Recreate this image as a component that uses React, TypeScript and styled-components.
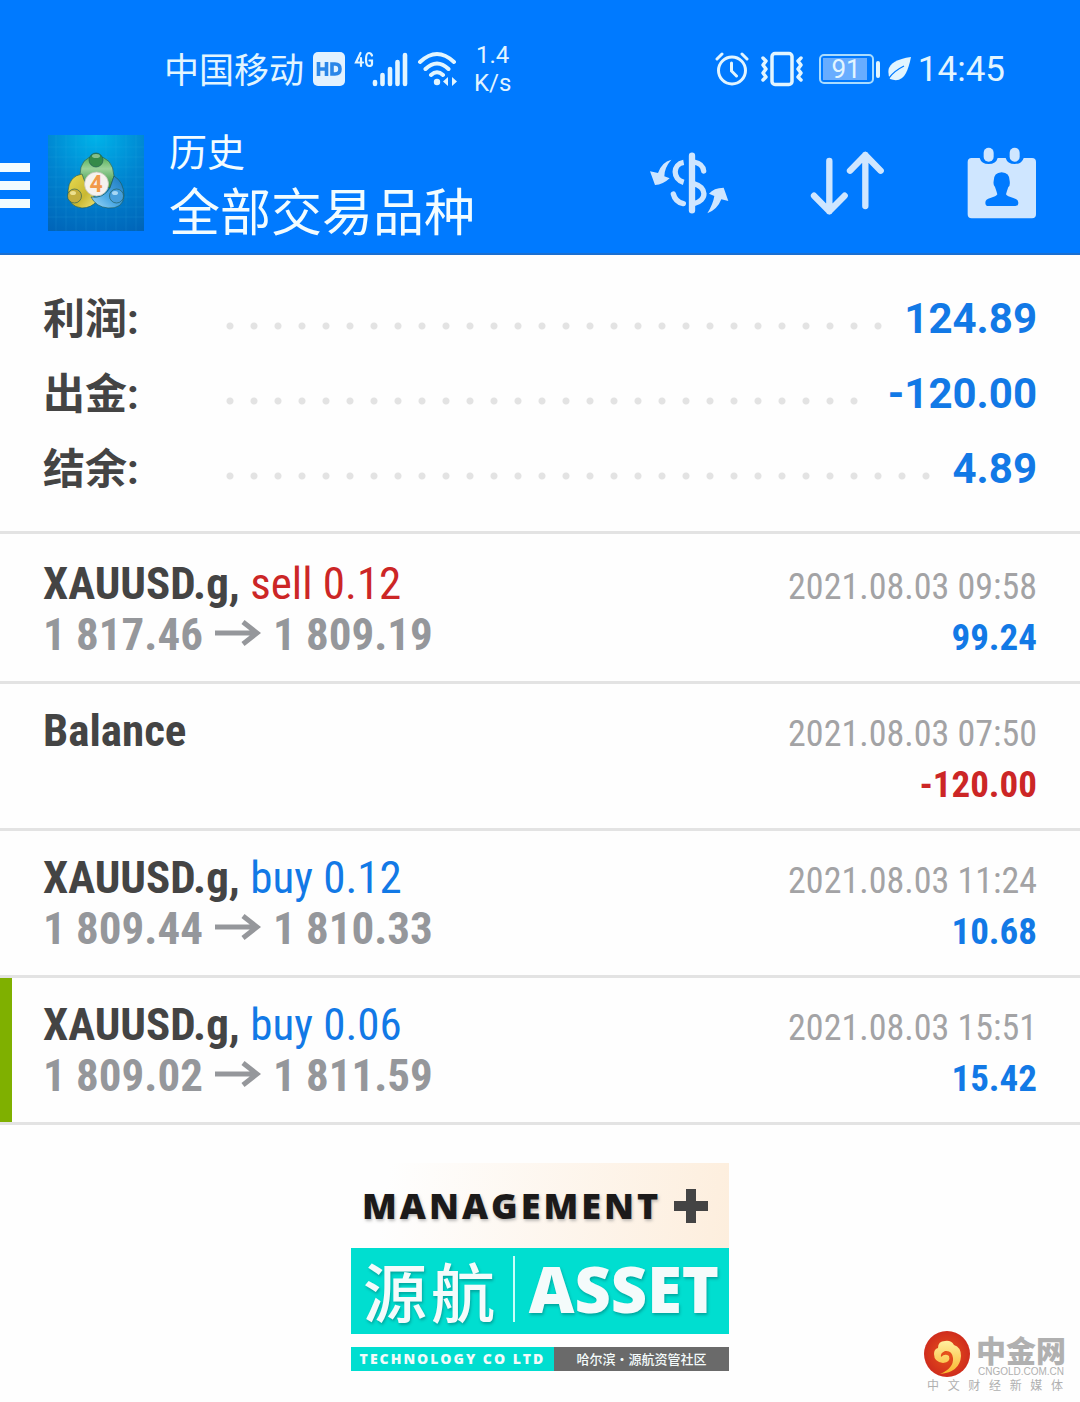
import React from "react";
import styled, { createGlobalStyle } from "styled-components";

const cjk = `"Noto Sans CJK SC", sans-serif`;
const condensed = `"Roboto Condensed", "Liberation Sans Narrow", Roboto, ${cjk}`;
const color = {
  brand: "#007aff",
  pale: "#cfe6ff",
  ink: "#444444",
  muted: "#95979b",
  date: "#a3a3a5",
  blue: "#1279e6",
  red: "#cc2626",
  line: "#e3e3e3",
  teal: "#00ded0",
};

const Global = createGlobalStyle`
  * { box-sizing: border-box; }
  body { margin: 0; background: #fefefe; font-family: Roboto, ${cjk}; }
`;

const Page = styled.div`
  display: flex;
  flex-direction: column;
`;

const Header = styled.header`
  background: ${color.brand};
  color: #e2f5ff;
  border-bottom: 2px solid #1b6fd0;
`;

const StatusBar = styled.div`
  display: flex;
  justify-content: space-between;
  align-items: center;
  height: 112px;
  padding: 26px 75px 0 164px;
`;

const StatusGroup = styled.div<{ $gap: number }>`
  display: flex;
  align-items: center;
  gap: ${(p) => p.$gap}px;
`;

const Carrier = styled.span`
  padding-top: 5px;
  font-size: 35px;
  line-height: 40px;
`;

const Speed = styled.span`
  font-size: 24px;
  line-height: 28px;
  text-align: center;
  margin-left: 7px;
`;

const Clock = styled.span`
  padding-top: 2px;
  font-size: 35px;
  line-height: 40px;
`;

const AppBar = styled.div`
  display: flex;
  align-items: center;
  height: 141px;
  padding-right: 43px;
`;

const IconButton = styled.button`
  display: flex;
  padding: 0;
  border: 0;
  background: none;
  color: ${color.pale};
`;

const MenuButton = styled(IconButton)`
  color: #f2fcff;
  margin-right: 18px;
`;

const Titles = styled.div`
  flex: 1;
  margin-left: 25px;
  padding-top: 10px;
  color: #f2fcff;
`;

const Overline = styled.div`
  font-size: 38px;
  line-height: 52px;
`;

const Title = styled.h1`
  margin: 0;
  font-size: 51px;
  font-weight: 400;
  line-height: 70px;
`;

const Actions = styled.div`
  display: flex;
  align-items: center;
  gap: 81px;
`;

const Summary = styled.dl`
  margin: 0;
  padding: 26px 43px 25px;
  border-bottom: 3px solid ${color.line};
`;

const SummaryRow = styled.div`
  display: flex;
  align-items: center;
  height: 75px;
  font-size: 42px;
  font-weight: 700;
`;

const SummaryLabel = styled.dt`
  width: 175px;
  padding-bottom: 6px;
  color: ${color.ink};
`;

const Leader = styled.div`
  flex: 1;
  margin-right: 8px;

  &::before {
    content: "";
    display: block;
    width: round(down, 100%, 24px);
    height: 22px;
    background: radial-gradient(circle at 12px 4px, #e3e3e3 3px, transparent 4px) left bottom / 24px 8px repeat-x;
  }
`;

const SummaryValue = styled.dd`
  margin: 0;
  color: ${color.blue};
`;

const Deals = styled.ul`
  margin: 0;
  padding: 3px 0 0;
  list-style: none;
  font-family: ${condensed};
`;

const Deal = styled.li<{ $marked?: boolean }>`
  height: 147px;
  padding: 21px 43px;
  border-bottom: 3px solid ${color.line};
  box-shadow: ${(p) => (p.$marked ? "inset 12px 0 0 #7fb000" : "none")};
`;

const DealLine = styled.div`
  display: flex;
  justify-content: space-between;
  align-items: baseline;
  height: 51px;
  line-height: 51px;
`;

const Instrument = styled.span`
  color: ${color.ink};
  font-size: 45px;
  font-weight: 700;
`;

const Side = styled.span<{ $side: "buy" | "sell" }>`
  color: ${(p) => (p.$side === "buy" ? color.blue : color.red)};
  font-weight: 400;
`;

const Prices = styled.span`
  color: ${color.muted};
  font-size: 45px;
  font-weight: 700;

  &::before {
    content: "\\200b";
  }

  svg {
    margin: 0 12px;
    vertical-align: 4px;
  }
`;

const DateText = styled.time`
  color: ${color.date};
  font-size: 36px;
`;

const Amount = styled.span<{ $negative: boolean }>`
  color: ${(p) => (p.$negative ? color.red : color.blue)};
  font-size: 37px;
  font-weight: 700;
`;

const Footer = styled.footer`
  display: grid;
  grid-template-columns: 1fr auto 1fr;
  align-items: end;
  padding: 38px 14px 8px;
`;

const Banner = styled.div`
  grid-column: 2;
  width: 378px;
  margin-bottom: 22px;
  font-family: "Open Sans", ${cjk};
`;

const BannerTop = styled.div`
  display: flex;
  align-items: center;
  justify-content: space-between;
  height: 85px;
  padding: 0 20px 0 11px;
  background: linear-gradient(100deg, #fefefe 10%, #fdeedd);
  color: #1c1a1a;
  font-size: 36px;
  font-weight: 800;
  letter-spacing: 3px;
  text-shadow: 1px 2px 3px #8888;
`;

const BannerMain = styled.div`
  display: flex;
  align-items: center;
  justify-content: space-between;
  height: 86px;
  padding: 0 10px 4px 12px;
  background: ${color.teal};
  color: #f4fbfb;
  text-shadow: 1px 2px 3px #0667;
`;

const BannerName = styled.span`
  font-family: ${cjk};
  font-size: 64px;
  font-weight: 500;
  line-height: 78px;
  letter-spacing: 4px;
`;

const BannerRule = styled.span`
  width: 2px;
  height: 66px;
  background: #c8fffa;
`;

const BannerWord = styled.span`
  font-size: 63px;
  font-weight: 800;
  line-height: 78px;
`;

const BannerStrip = styled.div`
  display: flex;
  height: 24px;
  margin-top: 13px;
  line-height: 24px;
  color: #f4fbfb;
  text-align: center;
`;

const StripLeft = styled.span`
  width: 203px;
  background: ${color.teal};
  font-size: 14px;
  font-weight: 800;
  letter-spacing: 2px;
`;

const StripRight = styled.span`
  flex: 1;
  background: #6a6a6a;
  font-family: ${cjk};
  font-size: 13px;
  font-weight: 500;
`;

const Source = styled.div`
  grid-column: 3;
  justify-self: end;
  color: #b0b0b0;
`;

const SourceTop = styled.div`
  display: flex;
  align-items: center;
  gap: 6px;
`;

const SourceName = styled.div`
  font-size: 30px;
  font-weight: 900;
  line-height: 36px;
  font-family: ${cjk};
`;

const SourceSite = styled.div`
  font: 10px/10px "Liberation Sans", sans-serif;
  text-align: center;
`;

const SourceTagline = styled.div`
  display: flex;
  justify-content: space-between;
  padding: 0 3px;
  font: 12px/16px ${cjk};
`;

const HdIcon = () => (
  <svg width="32" height="34" viewBox="0 0 32 34">
    <rect width="32" height="34" rx="5" fill="#e2f2ff" />
    <path d="M5.500 10v14M13.500 10v14M5 17h9M19 12v10h3q5 0 5-5t-5-5z" fill="none" stroke="#2a86e8" strokeWidth="3.600" />
  </svg>
);

const SignalIcon = () => (
  <svg width="54" height="36" viewBox="0 0 54 36" fill="none" stroke="#e2f5ff" strokeLinecap="round">
    <path d="M6.500 2L2 11.500h7M7 7v8" strokeWidth="2.200" />
    <path d="M18 4.500q-1-2.500-3-2.500-3 0-3 6.500t3 6.500q3 0 3-2v-3.500h-2.500" strokeWidth="2.200" />
    <path d="M21 33v-2M28.500 33v-9M36 33V18M43.500 33V11M51 33V4" strokeWidth="4.600" />
  </svg>
);

const WifiIcon = () => (
  <svg width="41" height="36" viewBox="0 0 41 36" fill="none" stroke="#e2f5ff" strokeWidth="4" strokeLinecap="round">
    <path d="M3 11Q20 -5 37 11M8.500 18Q20 7 31.500 18M14 24Q20 18.500 26 24" />
    <circle cx="20" cy="31" r="3.200" fill="#e2f5ff" stroke="none" />
    <path d="M26 30.500l5-4.500v9zM40 30.500l-5-4.500v9z" fill="#e2f5ff" stroke="none" />
  </svg>
);

const AlarmIcon = () => (
  <svg width="40" height="36" viewBox="0 0 40 36" fill="none" stroke="#e2f5ff" strokeWidth="3" strokeLinecap="round">
    <circle cx="17" cy="19.500" r="13.500" />
    <path d="M16.500 12v8l5 5M2 8l5-5M32 8l-5-5" />
  </svg>
);

const VibrateIcon = () => (
  <svg width="52" height="36" viewBox="0 0 52 36" fill="none" stroke="#e2f5ff" strokeWidth="3.500" strokeLinecap="round" strokeLinejoin="round">
    <rect x="11" y="2.500" width="20" height="31" rx="3" />
    <path d="M2 7l3 3-3 4 3 4-3 4 3 4-3 3M40 7l-3 3 3 4-3 4 3 4-3 4 3 3" />
  </svg>
);

const BatteryIcon = () => (
  <svg width="62" height="30" viewBox="0 0 62 30">
    <rect x="1" y="1" width="53" height="28" rx="4" fill="none" stroke="#a9dcff" strokeWidth="2" />
    <rect x="4" y="4" width="44" height="22" fill="#68adff" />
    <rect x="57" y="7" width="4" height="17" rx="2" fill="#e2f5ff" />
    <text x="27" y="24" fontSize="26" textAnchor="middle" fill="#e2f5ff">91</text>
  </svg>
);

const LeafIcon = () => (
  <svg width="25" height="26" viewBox="0 0 25 26">
    <path d="M24 1Q3 4 1.500 14Q1 19 3 23Q14 27 19 17Q22 11 24 1Z" fill="#e2f5ff" />
    <path d="M2 22Q7 15 17 10" fill="none" stroke={color.brand} strokeWidth="1.300" />
  </svg>
);

const MenuIcon = () => (
  <svg width="30" height="50" viewBox="0 0 30 50" fill="currentColor">
    <path d="M0 5h30v9H0zM0 23h30v9H0zM0 41h30v9H0z" />
  </svg>
);

const AppLogo = () => (
  <svg width="96" height="96" viewBox="0 0 96 96">
    <defs>
      <radialGradient id="sky" cx="0.5" cy="0" r="1.100">
        <stop offset="0" stopColor="#00b4ea" />
        <stop offset="0.500" stopColor="#0084d0" />
        <stop offset="1" stopColor="#0064b8" />
      </radialGradient>
      <linearGradient id="green" x2="0" y2="1">
        <stop offset="0" stopColor="#4fae55" />
        <stop offset="0.400" stopColor="#9bd29a" />
        <stop offset="1" stopColor="#2e8f3d" />
      </linearGradient>
      <linearGradient id="gold" x2="1" y2="1">
        <stop offset="0" stopColor="#e9dc52" />
        <stop offset="0.600" stopColor="#c9b832" />
        <stop offset="1" stopColor="#efe57c" />
      </linearGradient>
      <linearGradient id="azure" x1="1" x2="0" y2="1">
        <stop offset="0" stopColor="#1976bd" />
        <stop offset="0.600" stopColor="#4fabe6" />
        <stop offset="1" stopColor="#a5dcf8" />
      </linearGradient>
    </defs>
    <rect width="96" height="96" fill="url(#sky)" />
    <path
      d="M8 0v96M18 0v96M28 0v96M38 0v96M48 0v96M58 0v96M68 0v96M78 0v96M88 0v96M0 12h96M0 22h96M0 32h96M0 42h96M0 52h96M0 62h96M0 72h96M0 82h96"
      stroke="#48b8ee"
      strokeOpacity="0.130"
    />
    <g stroke="#1f5a55" strokeWidth="0.800" strokeOpacity="0.800">
      <path d="M32 40Q32 22 48 21Q65 22 66 41L62 53L36 46Z" fill="url(#green)" />
      <path d="M34 39Q21 41 20 56Q20 72 34 73Q43 73 49 66L38 50Z" fill="url(#gold)" />
      <path d="M66 41Q76 47 76 61Q75 74 60 73Q48 72 43 62Q55 64 62 53Z" fill="url(#azure)" />
      <circle cx="48" cy="25" r="7" fill="#348b49" />
      <circle cx="26.500" cy="61" r="7" fill="#c4ae3e" />
      <circle cx="68.500" cy="61" r="7" fill="#469edb" />
    </g>
    <ellipse cx="48" cy="21" rx="4" ry="2" fill="#bce2b8" fillOpacity="0.600" />
    <ellipse cx="25" cy="58" rx="3" ry="2" fill="#fff5b4" fillOpacity="0.700" />
    <ellipse cx="67" cy="58" rx="3" ry="2" fill="#d0efff" fillOpacity="0.700" />
    <circle cx="48.500" cy="49" r="12" fill="#f6f2ee" stroke="#c4c4b8" strokeWidth="0.800" />
    <text x="48" y="57" fontSize="23" fontWeight="700" textAnchor="middle" fill="#f29a4a">4</text>
  </svg>
);

const ExchangeIcon = () => (
  <svg width="80" height="64" viewBox="60 58 240 192" fill="none" stroke="currentColor" strokeWidth="16">
    <path d="M189 72V236" strokeWidth="19" strokeLinecap="round" />
    <path d="M195 91Q222 96 224 118M133 187Q139 211 163 216" strokeLinecap="round" />
    <path d="M164 92C130 98 130 142 164 152M194 156C234 166 236 206 194 216" />
    <path d="M127 84Q98 91 87 124L63 119L78 160Q102 159 122 140L106 134Q106 108 127 84ZM235 245Q252 218 256 193L240 186Q254 168 284 168L298 208L277 203Q265 234 235 245Z" fill="currentColor" stroke="none" />
  </svg>
);

const SortIcon = () => (
  <svg width="76" height="66" viewBox="536 58 228 198" fill="none" stroke="currentColor" strokeWidth="19" strokeLinecap="round" strokeLinejoin="round">
    <path d="M594 91V242M548 195L594 242L640 195M702 226V73M656 120L702 73L748 120" />
  </svg>
);

const CalendarIcon = () => (
  <svg width="70" height="72" viewBox="1012 48 210 216" fill="currentColor">
    <path d="M1026 81H1050Q1055 99 1077 99Q1099 99 1104 81H1128Q1133 99 1155 99Q1177 99 1182 81H1207Q1219 81 1219 93V250Q1219 262 1207 262H1026Q1014 262 1014 250V93Q1014 81 1026 81Z" />
    <rect x="1062" y="50" width="30" height="42" rx="15" />
    <rect x="1140" y="50" width="30" height="42" rx="15" />
    <path d="M1116 124Q1140 125 1140 150Q1142 164 1136 168Q1131 182 1129 190Q1132 196 1151 201Q1166 205 1166 215Q1166 225 1157 225H1076Q1067 225 1067 215Q1067 205 1082 201Q1100 196 1103 190Q1101 182 1096 168Q1090 164 1092 150Q1092 125 1116 124Z" fill={color.brand} />
  </svg>
);

const PriceArrow = () => (
  <svg width="46" height="26" viewBox="0 0 46 26" fill="none" stroke="currentColor" strokeWidth="5">
    <path d="M0 13H42M28 2L42 13L28 24" />
  </svg>
);

const PlusIcon = () => (
  <svg width="36" height="36" viewBox="0 0 36 36">
    <path d="M18 1V35M1 18H35" stroke="#444" strokeWidth="10" />
  </svg>
);

const CloudIcon = () => (
  <svg width="46" height="46" viewBox="0 0 46 46">
    <defs>
      <radialGradient id="ember">
        <stop offset="0" stopColor="#e8541c" />
        <stop offset="1" stopColor="#cf2c1c" />
      </radialGradient>
      <linearGradient id="flame" x2="0" y2="1">
        <stop offset="0" stopColor="#fff0a0" />
        <stop offset="1" stopColor="#f9b52c" />
      </linearGradient>
    </defs>
    <circle cx="23" cy="23" r="23" fill="url(#ember)" />
    <path
      d="M19 32Q10 31 10 23Q10 18 14 17Q14 10 21 10Q27 9 30 14Q37 16 37 25Q36 41 16 43Q30 37 29 27Q28 19 21 20Q16 22 17 26Q21 22 25 25Q27 31 19 32Z"
      fill="url(#flame)"
    />
  </svg>
);

const totals = [
  { label: "利润:", value: "124.89" },
  { label: "出金:", value: "-120.00" },
  { label: "结余:", value: "4.89" },
];

type DealData = {
  name: string;
  side?: "buy" | "sell";
  volume?: string;
  open?: string;
  close?: string;
  date: string;
  amount: string;
  marked?: boolean;
};

const deals: DealData[] = [
  { name: "XAUUSD.g", side: "sell", volume: "0.12", open: "1 817.46", close: "1 809.19", date: "2021.08.03 09:58", amount: "99.24" },
  { name: "Balance", date: "2021.08.03 07:50", amount: "-120.00" },
  { name: "XAUUSD.g", side: "buy", volume: "0.12", open: "1 809.44", close: "1 810.33", date: "2021.08.03 11:24", amount: "10.68" },
  { name: "XAUUSD.g", side: "buy", volume: "0.06", open: "1 809.02", close: "1 811.59", date: "2021.08.03 15:51", amount: "15.42", marked: true },
];

export default function App() {
  return (
    <Page>
      <Global />
      <Header>
        <StatusBar>
          <StatusGroup $gap={9}>
            <Carrier>中国移动</Carrier>
            <HdIcon />
            <SignalIcon />
            <WifiIcon />
            <Speed>
              1.4
              <br />
              K/s
            </Speed>
          </StatusGroup>
          <StatusGroup $gap={6}>
            <AlarmIcon />
            <VibrateIcon />
            <BatteryIcon />
            <LeafIcon />
            <Clock>14:45</Clock>
          </StatusGroup>
        </StatusBar>
        <AppBar>
          <MenuButton aria-label="菜单">
            <MenuIcon />
          </MenuButton>
          <AppLogo />
          <Titles>
            <Overline>历史</Overline>
            <Title>全部交易品种</Title>
          </Titles>
          <Actions>
            <IconButton aria-label="交易品种">
              <ExchangeIcon />
            </IconButton>
            <IconButton aria-label="排序">
              <SortIcon />
            </IconButton>
            <IconButton aria-label="日期">
              <CalendarIcon />
            </IconButton>
          </Actions>
        </AppBar>
      </Header>

      <Summary>
        {totals.map((t) => (
          <SummaryRow key={t.label}>
            <SummaryLabel>{t.label}</SummaryLabel>
            <Leader />
            <SummaryValue>{t.value}</SummaryValue>
          </SummaryRow>
        ))}
      </Summary>

      <Deals>
        {deals.map((d) => (
          <Deal key={d.date} $marked={d.marked}>
            <DealLine>
              <Instrument>
                {d.name}
                {d.side && (
                  <>
                    , <Side $side={d.side}>{`${d.side} ${d.volume}`}</Side>
                  </>
                )}
              </Instrument>
              <DateText>{d.date}</DateText>
            </DealLine>
            <DealLine>
              <Prices>
                {d.open && (
                  <>
                    {d.open}
                    <PriceArrow />
                    {d.close}
                  </>
                )}
              </Prices>
              <Amount $negative={d.amount.startsWith("-")}>{d.amount}</Amount>
            </DealLine>
          </Deal>
        ))}
      </Deals>

      <Footer>
        <Banner>
          <BannerTop>
            MANAGEMENT
            <PlusIcon />
          </BannerTop>
          <BannerMain>
            <BannerName>源航</BannerName>
            <BannerRule />
            <BannerWord>ASSET</BannerWord>
          </BannerMain>
          <BannerStrip>
            <StripLeft>TECHNOLOGY CO LTD</StripLeft>
            <StripRight>哈尔滨·源航资管社区</StripRight>
          </BannerStrip>
        </Banner>
        <Source>
          <SourceTop>
            <CloudIcon />
            <div>
              <SourceName>中金网</SourceName>
              <SourceSite>CNGOLD.COM.CN</SourceSite>
            </div>
          </SourceTop>
          <SourceTagline>
            {[..."中文财经新媒体"].map((c) => (
              <span key={c}>{c}</span>
            ))}
          </SourceTagline>
        </Source>
      </Footer>
    </Page>
  );
}
